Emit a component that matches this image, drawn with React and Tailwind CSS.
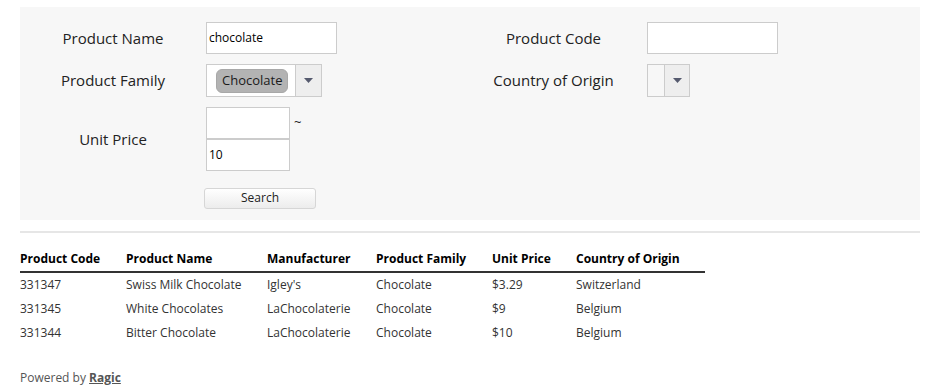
export default function App() {
  const rows = [
    ["331347", "Swiss Milk Chocolate", "Igley's", "Chocolate", "$3.29", "Switzerland"],
    ["331345", "White Chocolates", "LaChocolaterie", "Chocolate", "$9", "Belgium"],
    ["331344", "Bitter Chocolate", "LaChocolaterie", "Chocolate", "$10", "Belgium"],
  ];
  const widths = ["w-[106px]", "w-[141px]", "w-[109px]", "w-[116px]", "w-[84px]", "w-[129px]"];
  const heads = ["Product Code", "Product Name", "Manufacturer", "Product Family", "Unit Price", "Country of Origin"];
  const Arrow = () => (
    <svg width="9" height="5" viewBox="0 0 9 5"><path d="M0 0h9L4.5 5z" fill="#555a6e" /></svg>
  );
  return (
    <div className="w-[940px] h-[391px] bg-white px-[20px] pt-[7px] text-[#222]" style={{ fontFamily: '"Open Sans", sans-serif' }}>
      <div className="bg-[#f7f7f7] h-[213px] pt-[15px]">
        <div className="flex">
          {/* left column */}
          <div className="w-[440px] flex flex-col">
            <div className="flex items-center h-[32px]">
              <div className="w-[186px] text-center text-[15px]">Product Name</div>
              <div className="w-[131px] h-[32px] bg-white border border-[#ccc] flex items-center px-[2px] text-[12px] text-black">chocolate</div>
            </div>
            <div className="flex items-center h-[33px] mt-[10px]">
              <div className="w-[186px] text-center text-[15px]">Product Family</div>
              <div className="w-[116px] h-[33px] bg-white border border-[#ccc] flex">
                <div className="flex-1 flex items-center pl-[9px]">
                  <span className="bg-[#b3b3b3] rounded-[6px] h-[24px] px-[5px] flex items-center text-[13px] text-[#1a1a1a] border border-[#a8a8a8]">Chocolate</span>
                </div>
                <div className="w-[26px] border-l border-[#ccc] bg-[#eeeeee] flex items-center justify-center"><Arrow /></div>
              </div>
            </div>
            <div className="flex items-center mt-[10px]">
              <div className="w-[186px] text-center text-[15px]">Unit Price</div>
              <div className="flex flex-col">
                <div className="flex">
                  <div className="w-[84px] h-[32px] bg-white border border-[#ccc]" />
                  <span className="ml-[4px] text-[13px] leading-none pt-[9px]">~</span>
                </div>
                <div className="w-[84px] h-[32px] bg-white border border-[#ccc] flex items-center px-[2px] text-[12px] text-black">10</div>
              </div>
            </div>
            <div className="mt-[13px] pl-[184px]">
              <button className="w-[112px] h-[21px] rounded-[3px] border border-[#d6d6d6] bg-gradient-to-b from-white to-[#ececec] text-[12px] text-[#222] leading-none">Search</button>
            </div>
          </div>
          {/* right column */}
          <div className="w-[440px] flex flex-col">
            <div className="flex items-center h-[32px]">
              <div className="w-[187px] text-center text-[15px]">Product Code</div>
              <div className="w-[131px] h-[32px] bg-white border border-[#ccc]" />
            </div>
            <div className="flex items-center h-[33px] mt-[10px]">
              <div className="w-[187px] text-center text-[15px]">Country of Origin</div>
              <div className="w-[43px] h-[33px] bg-white border border-[#ccc] flex">
                <div className="w-[16px] bg-[#f7f7f7]" />
                <div className="flex-1 border-l border-[#ccc] bg-[#eeeeee] flex items-center justify-center"><Arrow /></div>
              </div>
            </div>
          </div>
        </div>
      </div>
      <div className="mt-[11px] h-[2px] bg-[#e6e6e6]" />
      <div className="mt-[13px] w-[685px] text-[12px]">
        <div className="flex h-[27px] border-b-2 border-[#333] items-center">
          {heads.map((h, i) => (
            <div key={h} className={`${widths[i]} font-bold text-black`}>{h}</div>
          ))}
        </div>
        {rows.map((r) => (
          <div key={r[0]} className="flex h-[24px] items-center">
            {r.map((c, i) => (
              <div key={i} className={`${widths[i]} text-[#333]`}>{c}</div>
            ))}
          </div>
        ))}
      </div>
      <div className="mt-[24px] text-[12px] text-[#555]">
        Powered by <span className="font-bold underline">Ragic</span>
      </div>
    </div>
  );
}
